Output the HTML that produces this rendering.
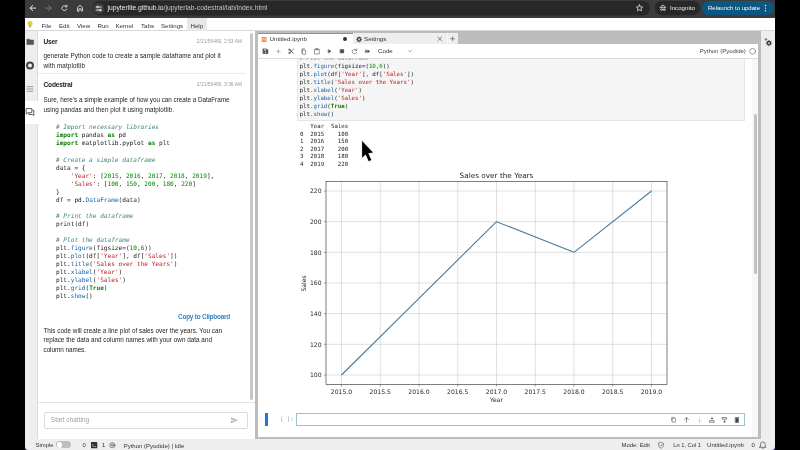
<!DOCTYPE html>
<html><head><meta charset="utf-8">
<style>
*{margin:0;padding:0;box-sizing:border-box}
html,body{width:800px;height:450px;overflow:hidden;background:#000}
body{position:relative;font-family:"Liberation Sans",sans-serif;color:#212121}
.a{position:absolute}
.t{position:absolute;white-space:pre;line-height:1}
.mono,pre{font-family:"DejaVu Sans Mono","Liberation Mono",monospace}
.dv{font-family:"DejaVu Sans",sans-serif}
.k{color:#008000;font-weight:bold}
.c{color:#408080;font-style:italic}
.s{color:#ba2121}
.n{color:#008800}
.o{color:#9440f0;font-weight:bold}
.p{color:#1664b0}
.ui{font-size:6.15px;color:#333}
.chatp{font-size:6.3px;line-height:10px;color:#222;white-space:pre}
.code{font-size:5.75px;line-height:8.1px;color:#212121;white-space:pre}
</style></head><body>
<div id="root" class="a" style="left:0;top:0;width:800px;height:450px;will-change:transform">
<!-- base -->
<div class="a" style="left:25px;top:0;width:750px;height:450px;background:#bcbcbc"></div>
<!-- browser chrome -->
<div class="a" id="chrome" style="left:25px;top:0;width:750px;height:17.5px;background:#3b3b3b"></div>
<svg class="a" style="left:0;top:0" width="800" height="18" viewBox="0 0 800 18">
 <rect x="92.5" y="1" width="557.5" height="14.5" rx="7.25" fill="#282828"/>
 <rect x="654.5" y=".9" width="45.5" height="14.3" rx="7.15" fill="#282828"/>
 <rect x="702" y=".9" width="72" height="14.3" rx="7.15" fill="#0c5682"/>
</svg>
<div class="t" style="left:107.5px;top:5px;font-size:6.73px;color:#e8e8e8">jupyterlite.github.io<span style="color:#c4c4c4">/jupyterlab-codestral/lab/index.html</span></div>
<div class="t" style="left:670px;top:5.2px;font-size:6.15px;color:#eee">Incognito</div>
<div class="t" style="left:708px;top:5.2px;font-size:6px;color:#fff">Relaunch to update</div>
<!-- menubar -->
<div class="a" style="left:25px;top:18px;width:750px;height:13px;background:#fff;border-bottom:1px solid #d8d8d8"></div>
<div class="a" style="left:186.5px;top:17.5px;width:20.5px;height:13px;background:#e8e8e8"></div>
<div class="t ui" style="left:41.5px;top:22.7px">File</div>
<div class="t ui" style="left:59px;top:22.7px">Edit</div>
<div class="t ui" style="left:77px;top:22.7px">View</div>
<div class="t ui" style="left:97.5px;top:22.7px">Run</div>
<div class="t ui" style="left:115.5px;top:22.7px">Kernel</div>
<div class="t ui" style="left:141px;top:22.7px">Tabs</div>
<div class="t ui" style="left:161px;top:22.7px">Settings</div>
<div class="t ui" style="left:190.5px;top:22.7px">Help</div>
<!-- left sidebar -->
<div class="a" style="left:25px;top:31px;width:13px;height:408px;background:#eeeeee"></div>
<div class="a" style="left:25px;top:100.6px;width:13px;height:23px;background:#fff"></div>
<div class="a" style="left:37.2px;top:31px;width:.6px;height:69.6px;background:#dcdcdc"></div>
<div class="a" style="left:37.2px;top:123.6px;width:.6px;height:316px;background:#dcdcdc"></div>
<!-- chat panel -->
<div class="a" style="left:38px;top:31px;width:217px;height:409px;background:#fff"></div>
<div class="a" style="left:250px;top:32.5px;width:3px;height:367.3px;background:#c6c6c6;border-radius:1.5px"></div>
<div class="t" style="left:43.5px;top:38.7px;font-size:6.6px;letter-spacing:-.18px;font-weight:bold;color:#222">User</div>
<div class="t" style="right:558px;top:40.1px;font-size:4.9px;color:#9a9a9a">2/21/56469, 2:53 AM</div>
<div class="a chatp" style="left:43.5px;top:51px"><span style="display:block;letter-spacing:0.047px">generate Python code to create a sample dataframe and plot it</span><span style="display:block;letter-spacing:0.106px">with matplotlib</span></div>
<div class="a" style="left:38px;top:73.4px;width:208px;height:.8px;background:#ebebeb"></div>
<div class="t" style="left:43.5px;top:82.1px;font-size:6.6px;letter-spacing:-.18px;font-weight:bold;color:#222">Codestral</div>
<div class="t" style="right:558px;top:83.3px;font-size:4.9px;color:#9a9a9a">2/21/56469, 3:36 AM</div>
<div class="a chatp" style="left:43.5px;top:94.8px"><span style="display:block;letter-spacing:-0.007px">Sure, here's a simple example of how you can create a DataFrame</span><span style="display:block;letter-spacing:0.058px">using pandas and then plot it using matplotlib.</span></div>
<pre class="a code" style="left:56px;top:123.4px;font-size:6.12px;line-height:8.03px"><span class="c"># Import necessary libraries</span>
<span class="k">import</span> pandas <span class="k">as</span> pd
<span class="k">import</span> matplotlib.pyplot <span class="k">as</span> plt

<span class="c"># Create a simple dataframe</span>
data <span class="o">=</span> {
    <span class="s">'Year'</span>: [<span class="n">2015</span>, <span class="n">2016</span>, <span class="n">2017</span>, <span class="n">2018</span>, <span class="n">2019</span>],
    <span class="s">'Sales'</span>: [<span class="n">100</span>, <span class="n">150</span>, <span class="n">200</span>, <span class="n">180</span>, <span class="n">220</span>]
}
df <span class="o">=</span> pd.<span class="p">DataFrame</span>(data)

<span class="c"># Print the dataframe</span>
print(df)

<span class="c"># Plot the dataframe</span>
plt.<span class="p">figure</span>(figsize<span class="o">=</span>(<span class="n">10</span>,<span class="n">6</span>))
plt.<span class="p">plot</span>(df[<span class="s">'Year'</span>], df[<span class="s">'Sales'</span>])
plt.<span class="p">title</span>(<span class="s">'Sales over the Years'</span>)
plt.<span class="p">xlabel</span>(<span class="s">'Year'</span>)
plt.<span class="p">ylabel</span>(<span class="s">'Sales'</span>)
plt.<span class="p">grid</span>(<span class="k">True</span>)
plt.<span class="p">show</span>()</pre>
<div class="t" style="right:570px;top:314.2px;font-size:6.4px;letter-spacing:-.2px;font-weight:bold;color:#3583c4">Copy to Clipboard</div>
<div class="a chatp" style="left:43.5px;top:325.7px;line-height:9.75px"><span style="display:block;letter-spacing:0.026px">This code will create a line plot of sales over the years. You can</span><span style="display:block;letter-spacing:0.033px">replace the data and column names with your own data and</span><span style="display:block;letter-spacing:-0.016px">column names.</span></div>
<div class="a" style="left:38px;top:402px;width:216.5px;height:.8px;background:#e4e4e4"></div>
<div class="a" style="left:44.2px;top:412px;width:203.4px;height:16.5px;border:.8px solid #dadada;border-radius:2px;background:#fff"></div>
<div class="t" style="left:50.8px;top:417.2px;font-size:6.53px;color:#a2a2a2">Start chatting</div>
<!-- splitter -->

<!-- dock: tab bar -->
<div class="a" style="left:258px;top:33px;width:95px;height:12px;background:#fff;border-top:1px solid #5a9cdc"></div>
<div class="a" style="left:353.3px;top:33.4px;width:93.5px;height:10.8px;background:#eeeeee"></div>
<div class="a" style="left:446.8px;top:33.4px;width:11.4px;height:10.8px;background:#eeeeee;border-left:.9px solid #f8f8f8"></div>
<div class="t ui" style="left:269.5px;top:36px;font-size:6.2px">Untitled.ipynb</div>
<div class="a" style="left:343px;top:37.4px;width:3.8px;height:3.8px;border-radius:50%;background:#333"></div>
<div class="t ui" style="left:364px;top:36px;font-size:6.2px">Settings</div>
<!-- notebook panel -->
<div class="a" style="left:258px;top:44.2px;width:500px;height:392.7px;background:#fff"></div>
<div class="a" style="left:258px;top:58px;width:500px;height:1px;background:#dcdcdc"></div>
<div class="t ui" style="left:378px;top:47.5px;font-size:6.2px">Code</div>
<div class="t ui" style="right:54.2px;top:48.2px;font-size:6px;color:#444">Python (Pyodide)</div>

<!-- code cell -->
<div class="a" style="left:297px;top:59px;width:448px;height:61.6px;background:#f5f5f5;border:.8px solid #e4e4e4;border-top:none"></div>
<div class="a" style="left:296px;top:54.1px;width:300px;height:69px;overflow:hidden;clip-path:inset(4.4px 0 0 0)"><pre class="a code" style="left:3.6px;top:0;line-height:8.05px"><span class="c" style="opacity:.75"># Plot the dataframe</span>
plt.<span class="p">figure</span>(figsize<span class="o">=</span>(<span class="n">10</span>,<span class="n">6</span>))
plt.<span class="p">plot</span>(df[<span class="s">'Year'</span>], df[<span class="s">'Sales'</span>])
plt.<span class="p">title</span>(<span class="s">'Sales over the Years'</span>)
plt.<span class="p">xlabel</span>(<span class="s">'Year'</span>)
plt.<span class="p">ylabel</span>(<span class="s">'Sales'</span>)
plt.<span class="p">grid</span>(<span class="k">True</span>)
plt.<span class="p">show</span>()</pre></div>
<pre class="a code" style="left:300px;top:123px;font-size:5.72px;line-height:7.54px">   Year  Sales
0  2015    100
1  2016    150
2  2017    200
3  2018    180
4  2019    220</pre>
<!-- scrollbar -->
<div class="a" style="left:751.5px;top:59px;width:6px;height:378.2px;background:#f7f7f7"></div>
<div class="a" style="left:753.5px;top:113.5px;width:3.2px;height:160px;background:#c1c1c1;border-radius:2px"></div>
<!-- chart -->
<svg class="a dv" style="left:296px;top:166px" width="380" height="244" viewBox="296 166 380 244" font-family="DejaVu Sans, sans-serif" fill="#262626">
 <g stroke="#c0c0c0" stroke-width=".5">
  <path d="M341.5 181.5V384.6M380.25 181.5V384.6M419 181.5V384.6M457.75 181.5V384.6M496.5 181.5V384.6M535.25 181.5V384.6M574 181.5V384.6M612.75 181.5V384.6M651.5 181.5V384.6"/>
  <path d="M326 375H667M326 344.33H667M326 313.67H667M326 283H667M326 252.33H667M326 221.66H667M326 191H667"/>
 </g>
 <polyline fill="none" stroke="#487c9c" stroke-width="1.1" stroke-linejoin="round" points="341.5,375 419,298.33 496.5,221.66 574,252.33 651.5,191"/>
 <rect x="326" y="181.5" width="341" height="203.1" fill="none" stroke="#2a2a2a" stroke-width=".6"/>
 <g stroke="#2a2a2a" stroke-width=".45">
  <path d="M341.5 384.6v2M380.25 384.6v2M419 384.6v2M457.75 384.6v2M496.5 384.6v2M535.25 384.6v2M574 384.6v2M612.75 384.6v2M651.5 384.6v2"/>
  <path d="M326 375h-2M326 344.33h-2M326 313.67h-2M326 283h-2M326 252.33h-2M326 221.66h-2M326 191h-2"/>
 </g>
 <text x="496.5" y="178" font-size="7.3" text-anchor="middle">Sales over the Years</text>
 <g font-size="6.1" text-anchor="middle">
  <text x="341.5" y="393.8">2015.0</text><text x="380.25" y="393.8">2015.5</text><text x="419" y="393.8">2016.0</text><text x="457.75" y="393.8">2016.5</text><text x="496.5" y="393.8">2017.0</text><text x="535.25" y="393.8">2017.5</text><text x="574" y="393.8">2018.0</text><text x="612.75" y="393.8">2018.5</text><text x="651.5" y="393.8">2019.0</text>
  <text x="496.5" y="402.2">Year</text>
 </g>
 <g font-size="6.1" text-anchor="end">
  <text x="321.6" y="377.2">100</text><text x="321.6" y="346.53">120</text><text x="321.6" y="315.87">140</text><text x="321.6" y="285.2">160</text><text x="321.6" y="254.53">180</text><text x="321.6" y="223.86">200</text><text x="321.6" y="193.2">220</text>
 </g>
 <text font-size="6.1" text-anchor="middle" transform="translate(306 283.4) rotate(-90)">Sales</text>
</svg>
<!-- empty cell -->
<div class="a" style="left:265px;top:413.3px;width:3.4px;height:12.8px;background:#2277d0"></div>
<div class="t mono" style="left:280px;top:416.5px;font-size:5.7px;color:#9a9a9a">[ ]:</div>
<div class="a" style="left:296px;top:413px;width:449px;height:12.5px;border:.9px solid #9cc0cc;background:#fff"></div>
<!-- right sidebar -->
<div class="a" style="left:761px;top:31px;width:14px;height:408px;background:#eeeeee"></div>
<!-- status bar -->
<div class="a" style="left:25px;top:439.1px;width:750px;height:11px;background:#eeeeee"></div>
<div class="t ui" style="left:35.5px;top:442.6px;font-size:5.95px">Simple</div>
<div class="a" style="left:55.8px;top:441.4px;width:15px;height:7px;border-radius:4px;background:#bdbdbd"></div>
<div class="a" style="left:56.6px;top:442.2px;width:5.4px;height:5.4px;border-radius:50%;background:#fff"></div>
<div class="t ui" style="left:82.5px;top:442.6px;font-size:5.95px">0</div>
<div class="a" style="left:91px;top:441.5px;width:6px;height:6.5px;background:#333"></div>
<div class="t ui" style="left:102px;top:442.6px;font-size:5.95px">1</div>
<div class="t ui" style="left:123.7px;top:442.6px;font-size:6px">Python (Pyodide) | Idle</div>
<div class="t ui" style="left:621.5px;top:442.6px;font-size:5.95px">Mode: Edit</div>
<div class="t ui" style="left:673.2px;top:442.6px;font-size:5.75px">Ln 1, Col 1</div>
<div class="t ui" style="left:707px;top:442.2px;font-size:6.1px">Untitled.ipynb</div>
<div class="t ui" style="left:751.6px;top:442.6px;font-size:5.95px">0</div>

<!-- ICONS -->
<svg class="a" style="left:0;top:0;pointer-events:none" width="800" height="450" viewBox="0 0 800 450" fill="none" stroke-linecap="round" stroke-linejoin="round">
 <!-- browser nav -->
 <g stroke="#e6e6e6" stroke-width="1">
  <path d="M35.6 8.1H30.2M32.7 5.4L30 8.1L32.7 10.8"/>
  <path d="M45.6 8.1H51M48.5 5.4L51.2 8.1L48.5 10.8" stroke="#777"/>
  <path d="M66.4 6.5A2.5 2.5 0 1 0 66.8 9M66.9 5.1V6.8H65.2" stroke-width=".9"/>
  <path d="M77.5 10.9V7.4L80 5.3L82.5 7.4V10.9H81V8.8H79V10.9Z" stroke-width=".85" stroke-linejoin="miter"/>
 </g>
 <circle cx="98.8" cy="8.5" r="5.6" fill="#3d3d3d"/>
 <g stroke="#e6e6e6" stroke-width=".9">
  <path d="M96.2 7H101.4M96.2 10.1H101.4"/>
  <circle cx="97.6" cy="7" r=".9" fill="#3d3d3d"/><circle cx="100" cy="10.1" r=".9" fill="#3d3d3d"/>
 </g>
 <path d="M639.5 4.8l.95 2.05 2.2.25-1.65 1.5.45 2.2-1.95-1.1-1.95 1.1.45-2.2-1.65-1.5 2.2-.25z" stroke="#e6e6e6" stroke-width=".8"/>
 <g stroke="#e6e6e6" stroke-width=".7">
  <path d="M659.9 7.4H665.9M661.2 7.2L661.8 5.4H664L664.6 7.2"/>
  <circle cx="661.5" cy="9.6" r=".95"/><circle cx="664.3" cy="9.6" r=".95"/><path d="M662.45 9.4H663.35"/>
 </g>
 <g fill="#fff"><circle cx="765.5" cy="5.5" r=".7"/><circle cx="765.5" cy="8.1" r=".7"/><circle cx="765.5" cy="10.7" r=".7"/></g>
 <!-- lightbulb -->
 <circle cx="30" cy="23.6" r="2.5" fill="#d6d438"/>
 <rect x="29.2" y="25.8" width="1.6" height="1.5" fill="#8a8a40"/>
 <!-- left sidebar icons -->
 <path d="M27 39.2H29.6L30.4 40H33.6V44.6H27Z" fill="#555" stroke="#555" stroke-width=".5"/>
 <circle cx="30" cy="65.6" r="3" stroke="#444" stroke-width="2"/>
 <path d="M26.6 86.7H33.2M26.6 89H33.2M26.6 91.3H33.2" stroke="#6a6a6a" stroke-width=".65" stroke-linecap="butt"/>
 <path d="M26.5 108.6H31.8V112.7H27.9L26.5 113.9Z M32.6 110.3H33.8V115.6L32.6 114.5H28.9V113.5" stroke="#383838" stroke-width=".8" stroke-linejoin="miter"/>
 <!-- tab icons -->
 <rect x="261.6" y="36.9" width="5" height="5" rx=".6" fill="#f58b45"/>
 <path d="M262.8 40.6V38.2L264.1 39.6L265.4 38.2V40.6" stroke="#fff" stroke-width=".5"/>
 <circle cx="359.1" cy="39.4" r="1.7" stroke="#444" stroke-width="1.2"/>
 <path d="M359.1 36.8V42M356.5 39.4H361.7M357.3 37.6L360.9 41.2M360.9 37.6L357.3 41.2" stroke="#444" stroke-width=".7"/>
 <circle cx="359.1" cy="39.4" r=".8" fill="#eee"/>
 <path d="M437.9 37L441.6 40.7M441.6 37L437.9 40.7" stroke="#444" stroke-width=".65"/>
 <path d="M450.6 38.8H454.6M452.6 36.8V40.8" stroke="#444" stroke-width=".6"/>
 <!-- toolbar icons -->
 <g stroke="#444" stroke-width=".6">
  <path d="M263.2 48.9H266.9L267.9 49.9V53.6H263.2Z" fill="#444"/>
  <rect x="264.1" y="49.4" width="2.3" height="1.1" fill="#fff" stroke="none"/>
  <circle cx="265.5" cy="52.2" r=".7" fill="#fff" stroke="none"/>
  <path d="M276.6 51.3H280.2M278.4 49.5V53.1" stroke="#777" stroke-width=".5"/>
  <path d="M290 50.1L293.4 53.3M290 52.5L293.4 49.3" stroke-width=".75"/>
  <circle cx="289.4" cy="49.7" r=".8"/><circle cx="289.4" cy="52.9" r=".8"/>
  <path d="M302.8 50.1H305.6V54.2H302.8Z M301.9 52.9V48.9H304.6" stroke="#555"/>
  <path d="M314.9 49.3H319.3V54H314.9Z M316.1 48.6H318.1V49.8H316.1Z" stroke="#555"/>
  <path d="M328.5 49.8L331 51.3L328.5 52.8Z" fill="#444"/>
  <rect x="340.4" y="49.6" width="3.3" height="3.3" fill="#444"/>
  <path d="M356.4 50.2A2.3 2.3 0 1 0 356.7 52.4M356.7 48.9V50.5H355.1" stroke="#555"/>
  <path d="M365.7 49.9L367.6 51.3L365.7 52.7ZM367.9 49.9L369.8 51.3L367.9 52.7Z" fill="#444" stroke-width=".4"/>
  <path d="M408.9 50.6L410.2 51.9L411.5 50.6" stroke="#555"/>
 </g>
 <circle cx="752.6" cy="51.3" r="2.9" stroke="#555" stroke-width=".55"/>
 <!-- right sidebar gears -->
 <circle cx="768.9" cy="43.1" r="1.7" stroke="#3a3a3a" stroke-width="1.2"/>
 <path d="M768.9 40.3V45.9M766.1 43.1H771.7M766.9 41.1L770.9 45.1M770.9 41.1L766.9 45.1" stroke="#3a3a3a" stroke-width=".75"/>
 <circle cx="768.9" cy="43.1" r=".85" fill="#eee"/>
 <circle cx="765.8" cy="39.4" r=".9" stroke="#3a3a3a" stroke-width=".6"/>
 <!-- cell toolbar -->
 <g stroke="#444" stroke-width=".6">
  <path d="M672.6 418.4H675.4V422.2H672.6Z M671.6 420.8V417.4H674.4" stroke="#666"/>
  <path d="M686.5 422.2V417.6M684.6 419.5L686.5 417.6L688.4 419.5"/>
  <path d="M699.5 417.6V422.2M697.6 420.3L699.5 422.2L701.4 420.3" stroke="#c4c4c4"/>
  <path d="M709.9 420.6H714.1V422.3H709.9Z M712 419.4V417.4M711.1 418.4H712.9"/>
  <path d="M722.4 417.5H726.6V419.2H722.4Z M724.5 420V422.3M723.5 421.3L724.5 422.3L725.5 421.3"/>
  <path d="M735.6 418.2H738.4V422.4H735.6Z" fill="#444"/><path d="M735.2 417.5H738.8"/>
 </g>
 <!-- status icons -->
 <rect x="91" y="442.3" width="6.3" height="6" rx=".6" fill="#333"/>
 <path d="M92.4 444.4L93.4 445.3L92.4 446.2M94 446.6H95.6" stroke="#fff" stroke-width=".5"/>
 <circle cx="112.3" cy="445.2" r="2.6" stroke="#444" stroke-width=".6"/>
 <circle cx="112.3" cy="445.2" r="1" stroke="#444" stroke-width=".6"/>
 <path d="M661 442.4L663.4 443.2V445.3C663.4 446.8 662.2 447.8 661 448.2C659.8 447.8 658.6 446.8 658.6 445.3V443.2Z M659.9 445.2L660.8 446.1L662.3 444.4" stroke="#444" stroke-width=".55"/>
 <path d="M759.6 447.3H766L765.1 446.1V444.2A2.3 2.3 0 0 0 760.5 444.2V446.1Z M762.2 448.2H763.4" stroke="#333" stroke-width=".6"/>
 <!-- send -->
 <path transform="translate(230.2 416.1) scale(.345)" d="M2.01 21L23 12 2.01 3 2 10l15 2-15 2z" fill="#b4b4b4"/>
 <!-- cursor -->
 <path d="M362.1 141V157.7L365.7 154.4L368.7 161.2L371.3 160.1L368.3 153.3L373 152.4Z" fill="#000" stroke="#fff" stroke-width="1.7" paint-order="stroke" stroke-linejoin="miter" style="filter:drop-shadow(0 .6px .7px rgba(0,0,0,.3))"/>
<!-- window corners -->
 <path d="M25 450V446.5A3.5 3.5 0 0 0 28.5 450Z" fill="#2a1c66"/>
 <path d="M775 450V446.5A3.5 3.5 0 0 1 771.5 450Z" fill="#2a1c66"/>
 <path d="M25 0V2.2A2.2 2.2 0 0 1 27.2 0Z" fill="#3a2a9a"/>
 <path d="M775 0V2.2A2.2 2.2 0 0 0 772.8 0Z" fill="#4a2a8a"/>
</svg>
</div>
</body></html>
